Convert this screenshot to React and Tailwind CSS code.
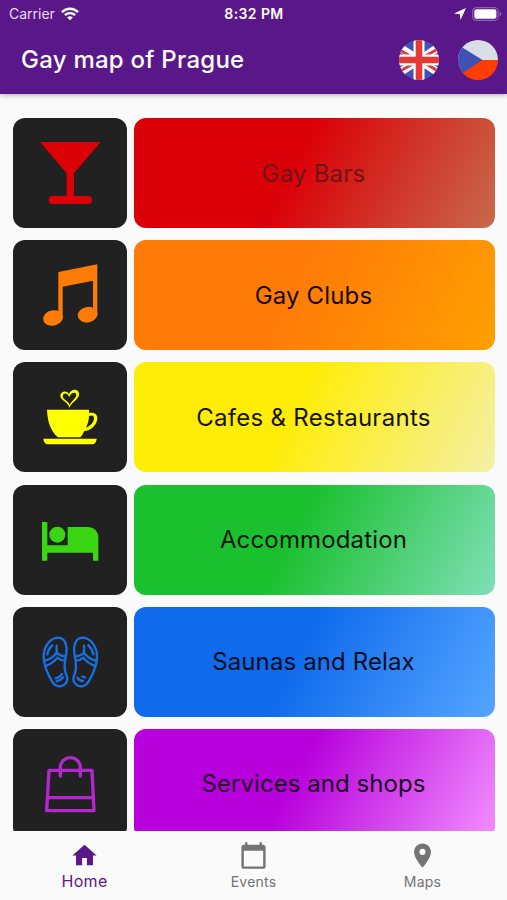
import React, { useState } from 'react'
import { MdHome, MdCalendarToday, MdPlace } from 'react-icons/md'

function CocktailIcon() {
  return (
    <svg viewBox="0 0 342 330" className="h-full w-full" fill="#dc0007">
      <path d="M81 72H263L183 166V236H161V166Z" />
      <rect x="107" y="234" width="130" height="24" rx="12" />
    </svg>
  )
}

function MusicIcon() {
  return (
    <svg viewBox="0 0 342 330" className="h-full w-full" fill="#ff7b08">
      <path d="M136 96L253 73V224H240V122L149 140V234H136Z" />
      <ellipse cx="120" cy="234" rx="30" ry="23" transform="rotate(-12 120 234)" />
      <ellipse cx="224" cy="224" rx="30" ry="23" transform="rotate(-12 224 224)" />
    </svg>
  )
}

function CupIcon() {
  return (
    <svg viewBox="0 0 342 330" className="h-full w-full" fill="#ffff00">
      <path d="M102 143H228V153C240 150 253 154 253 168C253 189 233 206 213 208C210 216 206 222 202 226H135C113 207 103 178 102 143ZM228 162C228 176 224 187 219 197C232 193 243 181 243 169C243 160 235 159 228 162Z" fillRule="evenodd" />
      <path d="M91 230H251C250 240 245 247 237 247H105C97 247 92 240 91 230Z" />
      <path d="M169 138C168 121 140 115 142 100C144 86 163 84 168 97C172 81 195 78 198 94C201 112 176 119 169 138ZM170 130C175 115 191 110 190 97C187 87 172 93 169 105C163 91 150 92 149 102C149 113 168 117 170 130Z" fillRule="evenodd" />
    </svg>
  )
}

function BedIcon() {
  return (
    <svg viewBox="0 0 342 330" className="h-full w-full" fill="#3bd613">
      <path d="M87 111H103V181H164V126H224C243 126 256 139 256 157V227H240V203H103V227H87Z" />
      <circle cx="133" cy="149" r="24" />
    </svg>
  )
}

function Sandal() {
  return (
    <g>
      <path d="M137 92C113 92 92 115 92 149C92 180 107 206 117 223C126 239 143 242 154 233C164 225 165 213 159 201C152 187 155 165 159 145C164 118 157 93 137 92Z" />
      <path d="M93 162C108 158 122 151 131 137C138 144 147 148 157 148" />
      <path d="M97 177C112 172 124 165 133 152C140 158 147 161 155 161" />
      <path d="M131 116V137M103 142C105 131 110 122 118 115" />
    </g>
  )
}

function SandalsIcon() {
  return (
    <svg
      viewBox="0 0 342 330"
      className="h-full w-full"
      fill="none"
      stroke="#176fe5"
      strokeWidth="7"
      strokeLinecap="round"
      strokeLinejoin="round"
    >
      <Sandal />
      <path d="M128 214C136 213 142 208 147 201M131 223C140 221 147 216 151 211" />
      <g transform="translate(344 0) scale(-1 1)">
        <Sandal />
      </g>
      <path d="M193 212C197 219 203 222 210 222M208 209L216 211" />
    </svg>
  )
}

function BagIcon() {
  return (
    <svg
      viewBox="0 0 342 330"
      className="h-full w-full"
      fill="none"
      stroke="#b427d0"
      strokeWidth="10"
      strokeLinecap="round"
      strokeLinejoin="round"
    >
      <path d="M108 124H237L243 245H101ZM103 206H241" />
      <path d="M142 141V116C142 76 202 76 202 116V141" />
    </svg>
  )
}

function WifiIcon() {
  return (
    <svg viewBox="0 0 18 14" className="h-[14px] w-[18px]" fill="none" stroke="#fff" strokeWidth="2.4">
      <path d="M.9 5.2C5.5.6 12.5.6 17.1 5.2M3.9 8.2C6.8 5.4 11.2 5.4 14.1 8.2" />
      <path d="M6.2 10.4Q9 8.1 11.8 10.4L9 13.3Z" fill="#fff" stroke="none" />
    </svg>
  )
}

function BatteryIcon() {
  return (
    <svg viewBox="0 0 30 14" className="h-[14px] w-[30px]">
      <rect x=".6" y=".6" width="25.5" height="12.8" rx="3.8" fill="none" stroke="#8f5fb2" strokeWidth="1.2" />
      <rect x="2.3" y="2.3" width="22.1" height="9.4" rx="2.2" fill="#fff" />
      <path d="M27.6 4.6C30 5.4 30 8.6 27.6 9.4Z" fill="#8f5fb2" />
    </svg>
  )
}

function UkFlag() {
  return (
    <svg viewBox="0 0 40 40" className="h-10 w-10">
      <clipPath id="uk">
        <circle cx="20" cy="20" r="20" />
      </clipPath>
      <g clipPath="url(#uk)">
        <rect width="40" height="40" fill="#4053b5" />
        <path d="M-6 3L46 37M46 3L-6 37" stroke="#fff" strokeWidth="8" />
        <path d="M-6 6L20 21.5M46 5L20 19.5M46 35.5L20 19.5M-6 35L20 20.5" stroke="#e53935" strokeWidth="3" />
        <path d="M20 0V40M0 20H40" stroke="#fff" strokeWidth="11" />
        <path d="M20 0V40M0 20H40" stroke="#e53935" strokeWidth="6.6" />
      </g>
    </svg>
  )
}

function CzechFlag() {
  return (
    <svg viewBox="0 0 40 40" className="h-10 w-10">
      <clipPath id="cz">
        <circle cx="20" cy="20" r="20" />
      </clipPath>
      <g clipPath="url(#cz)">
        <rect width="40" height="20" fill="#d9e0e5" />
        <rect y="20" width="40" height="20" fill="#ff3d00" />
        <path d="M-2 3.5L24.5 20L-2 37.5Z" fill="#3f51b5" />
      </g>
    </svg>
  )
}

const categories = [
  { label: 'Gay Bars', Icon: CocktailIcon, bg: 'bg-[linear-gradient(117deg,#db0007_44%,#c76a4b)]', text: 'text-[#6f1418] tracking-[0.2px]' },
  { label: 'Gay Clubs', Icon: MusicIcon, bg: 'bg-[linear-gradient(117deg,#ff7b08_44%,#ff9f00)]', text: 'text-[#160b00] tracking-[0.15px]' },
  { label: 'Cafes & Restaurants', Icon: CupIcon, bg: 'bg-[linear-gradient(117deg,#ffed08_44%,#f4f0a6)]', text: 'text-[#161500] tracking-[0.28px]' },
  { label: 'Accommodation', Icon: BedIcon, bg: 'bg-[linear-gradient(117deg,#1bc02f_44%,#80dfb8)]', text: 'text-[#03170a] tracking-[0.15px]' },
  { label: 'Saunas and Relax', Icon: SandalsIcon, bg: 'bg-[linear-gradient(117deg,#0f6aec_44%,#55a5ff)]', text: 'text-[#020d22] tracking-[0.12px]' },
  { label: 'Services and shops', Icon: BagIcon, bg: 'bg-[linear-gradient(117deg,#b800dc_44%,#f18fff)]', text: 'text-[#1b0322] tracking-[0.05px]' },
]

const tabs = [
  { label: 'Home', Icon: MdHome },
  { label: 'Events', Icon: MdCalendarToday },
  { label: 'Maps', Icon: MdPlace },
]

export default function App() {
  const [tab, setTab] = useState('Home')

  return (
    <div className="flex h-[900px] w-[507px] flex-col overflow-hidden bg-[#fafafa] font-[Inter,'Liberation_Sans',sans-serif]">
      <header className="z-10 h-[94px] shrink-0 bg-[#5a178a] text-white shadow-[0_1px_5px_rgba(0,0,0,0.3)]">
        {/* Status bar */}
        <div className="grid h-[27px] grid-cols-3 items-center pl-[9px] pr-[5px]">
          <div className="flex items-center gap-1.5 text-sm text-[#e6dcee]">
            Carrier
            <WifiIcon />
          </div>
          <div className="pr-[3px] text-center text-sm font-semibold tracking-[0.4px]">8:32 PM</div>
          <div className="flex items-center justify-end gap-1.5">
            <svg viewBox="0 0 12 12" className="h-3 w-3" fill="#fff">
              <path d="M12 0L6.500 12L5.800 6.200L0 5.500Z" />
            </svg>
            <BatteryIcon />
          </div>
        </div>

        <div className="flex h-[66px] items-center justify-between pl-[21px] pr-[9px]">
          <h1 className="text-2xl font-medium tracking-[0.25px]">Gay map of Prague</h1>
          <div className="flex gap-[19px]">
            <button aria-label="English"><UkFlag /></button>
            <button aria-label="Czech"><CzechFlag /></button>
          </div>
        </div>
      </header>

      <main className="flex min-h-0 flex-1 flex-col gap-[12.2px] overflow-hidden pl-[13px] pr-3 pt-6">
        {categories.map(({ label, Icon, bg, text }) => (
          <div key={label} className="flex h-[110px] shrink-0 gap-[7px]">
            <div className="w-[114px] shrink-0 rounded-xl bg-[#212121]">
              <Icon />
            </div>
            <button className={`flex-1 rounded-xl pr-0.5 pt-px text-2xl ${bg} ${text}`}>{label}</button>
          </div>
        ))}
      </main>

      <nav className="grid h-[69px] shrink-0 grid-cols-3 bg-[#fafafa]">
        {tabs.map(({ label, Icon }) => (
          <button
            key={label}
            onClick={() => setTab(label)}
            className={`flex flex-col items-center pt-2.5 ${tab === label ? 'text-[#5a178a]' : 'text-[#747474]'}`}
          >
            <Icon className="h-[29px] w-[29px] shrink-0" />
            <span className={`leading-5 ${tab === label ? 'pt-px text-base tracking-[0.3px]' : 'pt-0.5 text-sm tracking-[0.2px]'}`}>{label}</span>
          </button>
        ))}
      </nav>
    </div>
  )
}
